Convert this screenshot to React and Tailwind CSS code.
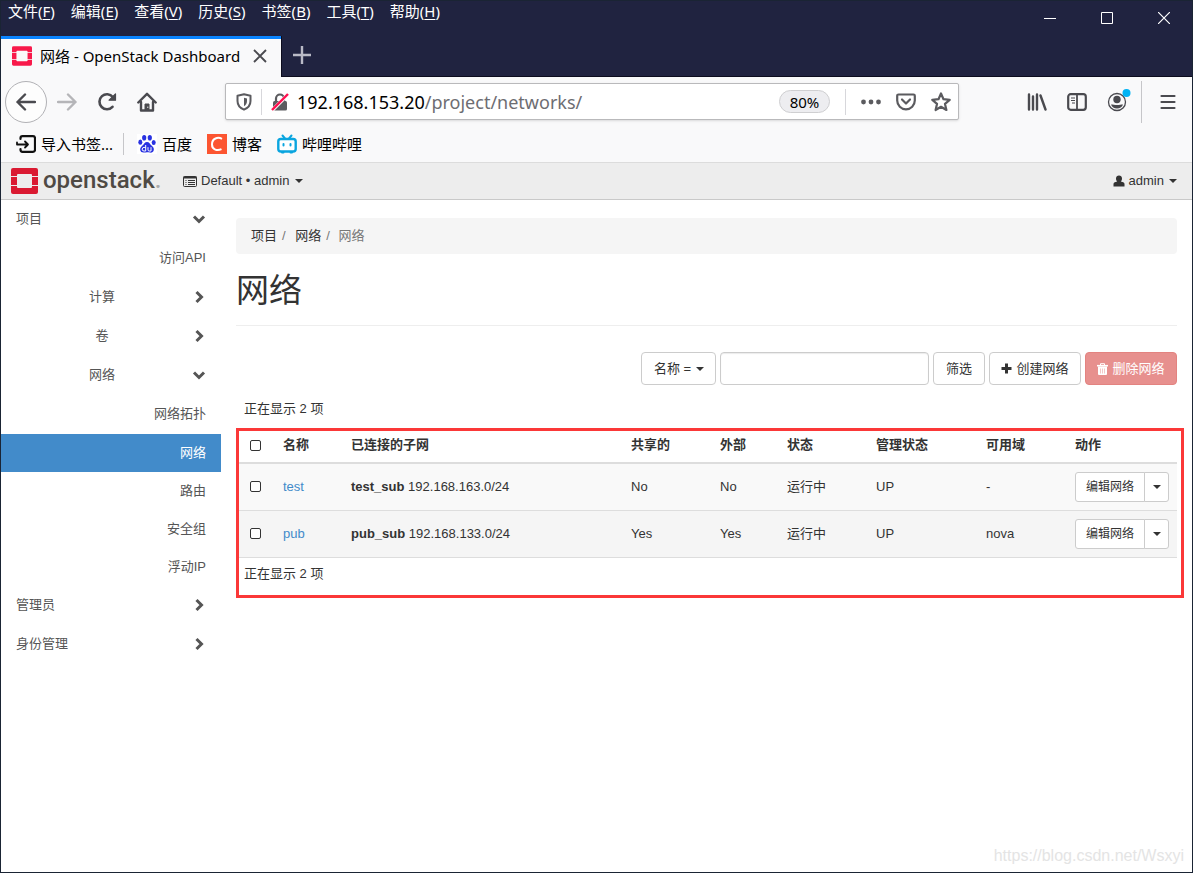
const menus = [
  ['文件', 'F'],
  ['编辑', 'E'],
  ['查看', 'V'],
  ['历史', 'S'],
  ['书签', 'B'],
  ['工具', 'T'],
  ['帮助', 'H'],
];

const sidebarItems = [
  { label: '项目', level: 1, open: true },
  { label: '访问API', level: 3 },
  { label: '计算', level: 2 },
  { label: '卷', level: 2 },
  { label: '网络', level: 2, open: true },
  { label: '网络拓扑', level: 3 },
  { label: '网络', level: 3, short: true, active: true },
  { label: '路由', level: 3, short: true },
  { label: '安全组', level: 3, short: true },
  { label: '浮动IP', level: 3, short: true },
  { label: '管理员', level: 1 },
  { label: '身份管理', level: 1 },
];

const networks = [
  { name: 'test', subnet: 'test_sub', cidr: '192.168.163.0/24', shared: 'No', external: 'No', zone: '-' },
  { name: 'pub', subnet: 'pub_sub', cidr: '192.168.133.0/24', shared: 'Yes', external: 'Yes', zone: 'nova' },
];

const Caret = ({ className = '' }) => (
  <svg viewBox="0 0 8 4" className={`h-1 w-2 shrink-0 ${className}`} fill="currentColor">
    <path d="M0 0h8L4 4z" />
  </svg>
);

const Chevron = ({ open }) => (
  <svg viewBox="0 0 14 14" className="h-3.5 w-3.5 shrink-0" fill="none" stroke="#555" strokeWidth="3">
    {open ? <path d="M2 4.5l5 5 5-5" /> : <path d="M4.5 2l5 5-5 5" />}
  </svg>
);

const OpenStackMark = ({ className, color }) => (
  <svg viewBox="0 0 27 26" className={className} fill={color}>
    <path d="M2 0h23a2 2 0 0 1 2 2v6h-6V7a1 1 0 0 0-1-1H7a1 1 0 0 0-1 1v1H0V2a2 2 0 0 1 2-2z" />
    <path d="M0 9h6v8H0zM21 9h6v8h-6z" />
    <path d="M0 18h6v1a1 1 0 0 0 1 1h13a1 1 0 0 0 1-1v-1h6v6a2 2 0 0 1-2 2H2a2 2 0 0 1-2-2z" />
  </svg>
);

const PlusIcon = () => (
  <svg viewBox="0 0 11 11" className="h-[11px] w-[11px]" fill="currentColor">
    <path d="M4 .5h3V4h3.500v3H7v3.500H4V7H.5V4H4z" />
  </svg>
);

const TrashIcon = () => (
  <svg viewBox="0 0 11 12" className="h-3 w-[11px]" fill="none" stroke="currentColor">
    <path d="M3.500 2V.7h4V2" />
    <path d="M0 2.700h11" strokeWidth="1.600" />
    <path d="M1 3.500h9V11a1 1 0 0 1-1 1H2a1 1 0 0 1-1-1z" fill="currentColor" stroke="none" />
    <path d="M3.500 5.500v5M5.500 5.500v5M7.500 5.500v5" stroke="#e7908e" strokeWidth=".5" />
  </svg>
);

const UserIcon = () => (
  <svg viewBox="0 0 12 12" className="h-3 w-3" fill="currentColor">
    <path d="M6 .5c1.800 0 3 1.200 3 3 0 1.300-.5 2.300-1.200 3l2.500.8c.8.300 1.200.9 1.200 1.700v2.500H.5V9c0-.8.400-1.400 1.200-1.700l2.500-.8C3.500 5.800 3 4.800 3 3.500c0-1.800 1.200-3 3-3z" />
  </svg>
);

const ToolButton = ({ label, className = 'w-10', children }) => (
  <button type="button" aria-label={label} className={`flex h-10 shrink-0 items-center justify-center ${className}`}>
    {children}
  </button>
);

const TitleBar = () => (
  <div className="bg-[#202340] text-white">
    <div className="flex h-[35px] justify-between">
      <nav className="flex h-[19px] items-center gap-4 pl-[7px] text-[15px]">
        {menus.map(([label, key]) => (
          <button type="button" key={key} className="leading-[20px] whitespace-nowrap">
            {label}(<span className="underline underline-offset-2">{key}</span>)
          </button>
        ))}
      </nav>
      <div className="flex">
        <ToolButton label="最小化" className="w-[57px]">
          <svg viewBox="0 0 12 12" className="mb-[6px] h-3 w-3" stroke="#fff"><path d="M0 6.500h12" /></svg>
        </ToolButton>
        <ToolButton label="最大化" className="w-[57px]">
          <svg viewBox="0 0 12 12" className="mb-[6px] h-3 w-3" stroke="#fff" fill="none"><path d="M.5.5h11v11H.5z" /></svg>
        </ToolButton>
        <ToolButton label="关闭" className="w-[57px]">
          <svg viewBox="0 0 12 12" className="mb-[6px] h-3 w-3" stroke="#fff" strokeWidth="1.200"><path d="M0 0l12 12M12 0L0 12" /></svg>
        </ToolButton>
      </div>
    </div>
    <div className="flex h-[41px]">
      <div className="flex w-[280px] items-center border-t-3 border-[#0a84ff] bg-[#f9f9fa] pr-[13px] pb-1 pl-[11px] text-black">
        <OpenStackMark className="h-5 w-5 shrink-0" color="#f8194a" />
        <span className="ml-2 flex-1 text-[15px] leading-6 whitespace-nowrap">网络 - OpenStack Dashboard</span>
        <button type="button" aria-label="关闭标签页">
          <svg viewBox="0 0 12 12" className="h-4 w-4" stroke="#4a4a4f" strokeWidth="1.400"><path d="M1.500 1.500l9 9M10.500 1.500l-9 9" /></svg>
        </button>
      </div>
      <div className="flex flex-1 border-b border-l border-[#0c0c1e]">
        <ToolButton label="新建标签页">
          <svg viewBox="0 0 18 18" className="mb-0.5 h-[18px] w-[18px]" stroke="#b9bac6" strokeWidth="2.400"><path d="M9 0v18M0 9h18" /></svg>
        </ToolButton>
      </div>
    </div>
  </div>
);

const AddressBar = () => (
  <div className="ml-[58px] flex h-[37px] flex-1 items-center rounded-[2px] border border-[#b9b9bb] bg-white shadow-sm">
    <svg viewBox="0 0 16 18" className="ml-2.5 h-[18px] w-4 shrink-0" fill="none" stroke="#5b5b5f" strokeWidth="2">
      <path d="M8 1.200l6.500 1.500v5.300c0 4-2.500 7-6.500 8.700C4 15 1.500 12 1.500 8V2.700z" strokeLinejoin="round" />
      <path d="M8 4.800v8.400c2-1.300 3-3 3-5.200V5.400z" fill="#5b5b5f" stroke="none" />
    </svg>
    <span className="ml-[9px] h-[26px] w-px bg-[#d7d7db]" />
    <svg viewBox="0 0 18 18" className="ml-[9px] h-[18px] w-[18px] shrink-0">
      <path d="M5 8V5.500a4 4 0 0 1 8 0V8" fill="none" stroke="#5b5b5f" strokeWidth="2.200" />
      <rect x="2" y="8" width="14" height="9.500" rx="1.500" fill="#5b5b5f" />
      <path d="M1 17.500L17 1.500" stroke="#fff" strokeWidth="3.600" />
      <path d="M1 17L17 1" stroke="#ff0f4f" strokeWidth="2.400" />
    </svg>
    <label className="relative ml-2 flex-1 text-[18px] leading-6">
      <span className="pointer-events-none absolute inset-0 whitespace-nowrap text-[#6d6d72]" aria-hidden="true">
        <span className="text-black">192.168.153.20</span>/project/networks/
      </span>
      <input aria-label="地址" defaultValue="192.168.153.20/project/networks/" className="w-full bg-transparent text-transparent caret-black outline-none" />
    </label>
    <button type="button" className="h-[23px] w-[51px] rounded-full border border-[#cfcfd1] bg-[#ededf0] text-[15px] leading-5 text-black">80%</button>
    <span className="ml-[15px] h-[26px] w-px bg-[#d7d7db]" />
    <ToolButton label="页面操作" className="ml-[7px] w-[35px]">
      <svg viewBox="0 0 20 6" className="h-1.5 w-5" fill="#5b5b5f"><circle cx="2.500" cy="3" r="2.400" /><circle cx="10" cy="3" r="2.400" /><circle cx="17.500" cy="3" r="2.400" /></svg>
    </ToolButton>
    <ToolButton label="保存到 Pocket" className="w-[35px]">
      <svg viewBox="0 0 20 18" className="h-[18px] w-5" fill="none" stroke="#5b5b5f" strokeWidth="2.200" strokeLinecap="round" strokeLinejoin="round">
        <path d="M2.500 1.500h15a1.300 1.300 0 0 1 1.300 1.300V7.500a8.800 8.800 0 0 1-17.600 0V2.800a1.300 1.300 0 0 1 1.300-1.300z" /><path d="M6 6.500l4 4 4-4" />
      </svg>
    </ToolButton>
    <ToolButton label="添加书签" className="w-[35px]">
      <svg viewBox="0 0 20 20" className="h-5 w-5" fill="none" stroke="#5b5b5f" strokeWidth="2.200" strokeLinejoin="round">
        <path d="M10 1.500l2.500 5.700 6.200.6-4.700 4.100 1.400 6.100L10 14.800 4.600 18 6 11.900 1.300 7.800l6.200-.6z" />
      </svg>
    </ToolButton>
  </div>
);

const NavBar = () => (
  <div className="flex h-[49px] items-center bg-[#f9f9fa] pr-2 pl-1">
    <button type="button" aria-label="后退" className="flex h-[42px] w-[42px] shrink-0 items-center justify-center rounded-full border border-[#b1b1b5] bg-[#fdfdfd]">
      <svg viewBox="0 0 20 18" className="h-[18px] w-5" fill="none" stroke="#4a4a4f" strokeWidth="2.400" strokeLinecap="round" strokeLinejoin="round"><path d="M19 9H1.500M9 1.500L1.500 9 9 16.500" /></svg>
    </button>
    <ToolButton label="前进">
      <svg viewBox="0 0 20 18" className="h-[18px] w-5" fill="none" stroke="#b5b5b8" strokeWidth="2.400" strokeLinecap="round" strokeLinejoin="round"><path d="M1 9h17.500M11 1.500L18.500 9 11 16.500" /></svg>
    </ToolButton>
    <ToolButton label="刷新">
      <svg viewBox="0 0 20 20" className="h-5 w-5" fill="none" stroke="#4a4a4f" strokeWidth="2.600" strokeLinecap="round">
        <path d="M15.500 14.800A7.500 7.500 0 1 1 15.800 5" /><path d="M18.500 1.800v6.400h-6.400z" fill="#4a4a4f" strokeWidth="1.200" strokeLinejoin="round" />
      </svg>
    </ToolButton>
    <ToolButton label="主页">
      <svg viewBox="0 0 20 20" className="h-5 w-5" fill="none" stroke="#4a4a4f" strokeWidth="2.400" strokeLinecap="round" strokeLinejoin="round">
        <path d="M1.300 10.500L10 1.800l8.700 8.700" /><path d="M4 10v8.500h12V10" /><path d="M8 18v-6h4v6" fill="#4a4a4f" strokeWidth="1" /><path d="M10.800 15v.5" stroke="#fff" strokeWidth="1" />
      </svg>
    </ToolButton>
    <AddressBar />
    <ToolButton label="我的足迹" className="ml-[58px] w-10">
      <svg viewBox="0 0 20 18" className="h-[18px] w-5" stroke="#4a4a4f" strokeWidth="2.400" strokeLinecap="round"><path d="M2 1.500v15M6 3.500v13M10 1.500v15M13.500 2.500l5 14" /></svg>
    </ToolButton>
    <ToolButton label="侧栏">
      <svg viewBox="0 0 20 18" className="h-[18px] w-5" fill="none" stroke="#4a4a4f" strokeWidth="2.200">
        <rect x="1.200" y="1.200" width="17.600" height="15.600" rx="2.500" /><path d="M10 1v16" strokeWidth="1.800" /><path d="M4 5h4M4 7.500h4M5 10h3" strokeWidth="1.200" />
      </svg>
    </ToolButton>
    <ToolButton label="账户">
      <svg viewBox="0 0 28 24" className="mb-1 h-6 w-7">
        <circle cx="14" cy="14" r="8.500" fill="none" stroke="#4a4a4f" strokeWidth="1.300" /><circle cx="14" cy="11.500" r="3.700" fill="#4a4a4f" />
        <path d="M8 16.500c2 0 3.500.6 6 .6s4-.6 6-.6c-.8 2.400-3.200 4-6 4s-5.200-1.600-6-4z" fill="#4a4a4f" />
        <circle cx="23.500" cy="5" r="4" fill="#00b3f4" />
      </svg>
    </ToolButton>
    <span className="ml-1 h-[42px] w-px bg-[#c6c6c9]" />
    <ToolButton label="打开菜单" className="ml-2.5 w-8">
      <svg viewBox="0 0 16 16" className="h-4 w-4" stroke="#4a4a4f" strokeWidth="2.200" strokeLinecap="round"><path d="M1.500 2h13M1.500 8h13M1.500 14h13" /></svg>
    </ToolButton>
  </div>
);

const Bookmarks = () => (
  <div className="flex h-[37px] items-center border-b border-[#dcdcdc] bg-[#f9f9fa] pl-[15px] text-[15px] leading-6 text-black">
    <a href="#import" className="flex items-center gap-[5px]">
      <svg viewBox="0 0 20 18" className="h-[18px] w-5" fill="none" stroke="#111" strokeLinejoin="round" strokeLinecap="round">
        <path d="M4.500 4V3.200a2 2 0 0 1 2-2H17a2 2 0 0 1 2 2v11.600a2 2 0 0 1-2 2H6.500a2 2 0 0 1-2-2V14" strokeWidth="2.200" />
        <path d="M1 7.500v2h11M9 6.500l3 3-3 3" strokeWidth="1.800" />
      </svg>
      导入书签...
    </a>
    <span className="ml-2.5 h-[22px] w-px bg-[#c6c6c9]" />
    <a href="#baidu" className="ml-[13px] flex items-center gap-[5px]">
      <svg viewBox="0 0 20 20" className="h-5 w-5" fill="#2932e1">
        <rect width="20" height="20" fill="#fff" />
        <ellipse cx="7.200" cy="3.800" rx="2.100" ry="2.800" /><ellipse cx="12.800" cy="3.800" rx="2.100" ry="2.800" />
        <ellipse cx="3.300" cy="8.200" rx="2" ry="2.600" /><ellipse cx="16.700" cy="8.500" rx="2" ry="2.600" />
        <path d="M10 8c2.300 0 3 2.200 4.500 3.500 1.500 1.300 2.700 2.600 2.300 4.600-.4 2-2 2.700-3.800 2.500-1.200-.1-2-.3-3-.3s-2 .3-3.200.3c-1.800.1-3.300-.7-3.600-2.500-.3-2 .9-3.300 2.300-4.600C7 10.200 7.700 8 10 8z" />
        <path d="M8.700 11v6H7a1.800 1.800 0 0 1 0-3.600h1.700M11 13.200v2.600a1.200 1.200 0 0 0 1.200 1.200H14v-3.800" fill="none" stroke="#fff" />
      </svg>
      百度
    </a>
    <a href="#blog" className="ml-[15px] flex items-center gap-[5px]">
      <svg viewBox="0 0 20 20" className="h-5 w-5">
        <rect width="20" height="20" fill="#fc5531" />
        <path d="M15 4.800C11 2.800 5 4 5 10.500c0 5.500 5.500 6.500 9.500 4.700" fill="none" stroke="#fff" strokeWidth="2" />
      </svg>
      博客
    </a>
    <a href="#bilibili" className="ml-[15px] flex items-center gap-[5px]">
      <svg viewBox="0 0 20 20" className="h-5 w-5" fill="none" stroke="#0aa5df" strokeWidth="2.400" strokeLinecap="round">
        <rect x="1.300" y="5" width="17.400" height="12.500" rx="2.500" fill="#fff" /><path d="M5.500 1.500L8 4.500M14.500 1.500L12 4.500M6.500 10v1.500M13.500 10v1.500M5 18.500h1.500M13.500 18.500H15" strokeWidth="2" />
      </svg>
      哔哩哔哩
    </a>
  </div>
);

const Header = () => (
  <header className="flex h-[37px] items-center border-b border-[#c9c9c9] bg-[#ededed] pr-[15px] pl-2.5">
    <a href="#home" className="flex w-[147px] items-center gap-[5px]">
      <OpenStackMark className="h-[26px] w-[27px] shrink-0" color="#da1a32" />
      <span className="pb-0.5 font-[Roboto] text-[24px] leading-8 font-medium text-[#4f4a44]">
        openstack<span className="text-[#aaa]">.</span>
      </span>
    </a>
    <button type="button" className="ml-[25px] flex items-center gap-1">
      <svg viewBox="0 0 14 11" className="h-[11px] w-3.5" fill="none" stroke="#333">
        <rect x=".5" y=".5" width="13" height="10" rx="1" /><path d="M.5 1.500h13" strokeWidth="2" /><path d="M2.500 4.500h1M5 4.500h7M2.500 6.500h1M5 6.500h7M2.500 8.500h1M5 8.500h7" />
      </svg>
      <span>Default • admin</span>
      <Caret className="ml-0.5" />
    </button>
    <button type="button" className="ml-auto flex items-center gap-1">
      <UserIcon />
      <span>admin</span>
      <Caret className="ml-px" />
    </button>
  </header>
);

const levelStyles = {
  1: 'text-left',
  2: 'text-center',
  3: 'text-right',
};

const Sidebar = () => (
  <nav className="w-[220px] shrink-0 text-[#555]">
    <ul>
      {sidebarItems.map((item, i) => (
        <li key={i}>
          <a
            href="#menu"
            className={`flex items-center gap-1 px-[15px] pb-px ${item.short ? 'h-[38px]' : 'h-[39px]'} ${item.active ? 'bg-[#428bca] text-white' : ''}`}
          >
            <span className={`flex-1 ${levelStyles[item.level]}`}>{item.label}</span>
            {item.level < 3 && <Chevron open={item.open} />}
          </a>
        </li>
      ))}
    </ul>
  </nav>
);

const FilterBar = () => (
  <div className="mt-[26px] flex justify-end gap-1">
    <label className="relative flex h-[33px] w-[75px] items-center">
      <select aria-label="筛选字段" className="h-full w-full appearance-none rounded-[4px] border border-[#ccc] bg-white pl-3">
        <option>名称 =</option>
      </select>
      <Caret className="pointer-events-none absolute right-3" />
    </label>
    <input aria-label="筛选值" className="h-[33px] w-[209px] rounded-[4px] border border-[#ccc] bg-white px-3 shadow-[inset_0_1px_1px_rgba(0,0,0,0.08)]" />
    <button type="button" className="h-[33px] w-[52px] rounded-[4px] border border-[#ccc] bg-white">筛选</button>
    <button type="button" className="flex h-[33px] w-[92px] items-center justify-center gap-1 rounded-[4px] border border-[#ccc] bg-white">
      <PlusIcon />
      创建网络
    </button>
    <button type="button" disabled className="flex h-[33px] w-[92px] items-center justify-center gap-1 rounded-[4px] border border-[#e38380] bg-[#e7908e] text-white">
      <TrashIcon />
      删除网络
    </button>
  </div>
);

const Check = ({ label }) => (
  <input type="checkbox" aria-label={label} className="ml-[7px] block h-[11px] w-[11px] appearance-none rounded-[2px] border border-[#333] bg-white" />
);

const NetworkTable = () => (
  <table className="w-full table-fixed border-collapse text-left">
    <thead>
      <tr className="h-[35px] border-b-2 border-[#ddd]">
        <th className="w-10 px-[7px]"><Check label="全选" /></th>
        <th className="w-[68px] px-[7px]">名称</th>
        <th className="px-[7px]">已连接的子网</th>
        <th className="w-[89px] px-[7px]">共享的</th>
        <th className="w-[67px] px-[7px]">外部</th>
        <th className="w-[89px] px-[7px]">状态</th>
        <th className="w-[110px] px-[7px]">管理状态</th>
        <th className="w-[89px] px-[7px]">可用域</th>
        <th className="w-[109px] px-[7px]">动作</th>
      </tr>
    </thead>
    <tbody>
      {networks.map((net) => (
        <tr key={net.name} className="h-[47px] border-b border-[#ddd] odd:bg-[#f9f9f9] even:bg-[#f5f5f5]">
          <td className="px-[7px]"><Check label={net.name} /></td>
          <td className="px-[7px]"><a href="#detail" className="text-[#428bca]">{net.name}</a></td>
          <td className="px-[7px]"><b>{net.subnet}</b> {net.cidr}</td>
          <td className="px-[7px]">{net.shared}</td>
          <td className="px-[7px]">{net.external}</td>
          <td className="px-[7px]">运行中</td>
          <td className="px-[7px]">UP</td>
          <td className="px-[7px]">{net.zone}</td>
          <td className="px-[7px]">
            <div className="flex text-[12px]">
              <button type="button" className="h-[30px] w-[70px] rounded-l-[3px] border border-[#ccc] bg-white">编辑网络</button>
              <button type="button" aria-label="更多操作" className="-ml-px flex h-[30px] w-[25px] items-center justify-center rounded-r-[3px] border border-[#ccc] bg-white">
                <Caret />
              </button>
            </div>
          </td>
        </tr>
      ))}
    </tbody>
  </table>
);

const App = () => {
  return (
    <div className="flex min-h-screen flex-col border border-[#1a2434] bg-white font-['Noto_Sans','Noto_Sans_CJK_SC',sans-serif]">
      <TitleBar />
      <NavBar />
      <Bookmarks />

      <div className="flex flex-1 flex-col font-['Liberation_Sans','Noto_Sans_CJK_SC',sans-serif] text-[13px] leading-[18px] text-[#333]">
        <Header />
        <div className="flex flex-1">
          <Sidebar />
          <main className="min-w-0 flex-1 px-[15px] pt-[18px]">
            <ol className="flex h-9 items-center rounded-[4px] bg-[#f5f5f5] px-[15px]">
              <li><a href="#project">项目</a></li>
              <li><span className="px-[5px] text-[#777]">/</span> <a href="#network" className="ml-px">网络</a></li>
              <li className="text-[#777]"><span className="px-[5px]">/</span> 网络</li>
            </ol>
            <h1 className="mt-[17px] border-b border-[#eee] pb-3.5 text-[33px] leading-10">网络</h1>

            <FilterBar />

            <p className="mt-[15px] pl-2">正在显示 2 项</p>
            <div className="relative mt-2.5">
              <NetworkTable />
              <p className="pt-[7px] pb-[15px] pl-2">正在显示 2 项</p>
              {/* Highlight frame around the network list */}
              <div className="pointer-events-none absolute top-0 -right-[7px] bottom-0 left-0 border-3 border-[#fb3838]" />
            </div>
          </main>
        </div>
        <footer className="pr-2 pb-1.5 text-right text-[16px] leading-5 text-[#e4e4e4]">https://blog.csdn.net/Wsxyi</footer>
      </div>
    </div>
  );
};

export default App;
